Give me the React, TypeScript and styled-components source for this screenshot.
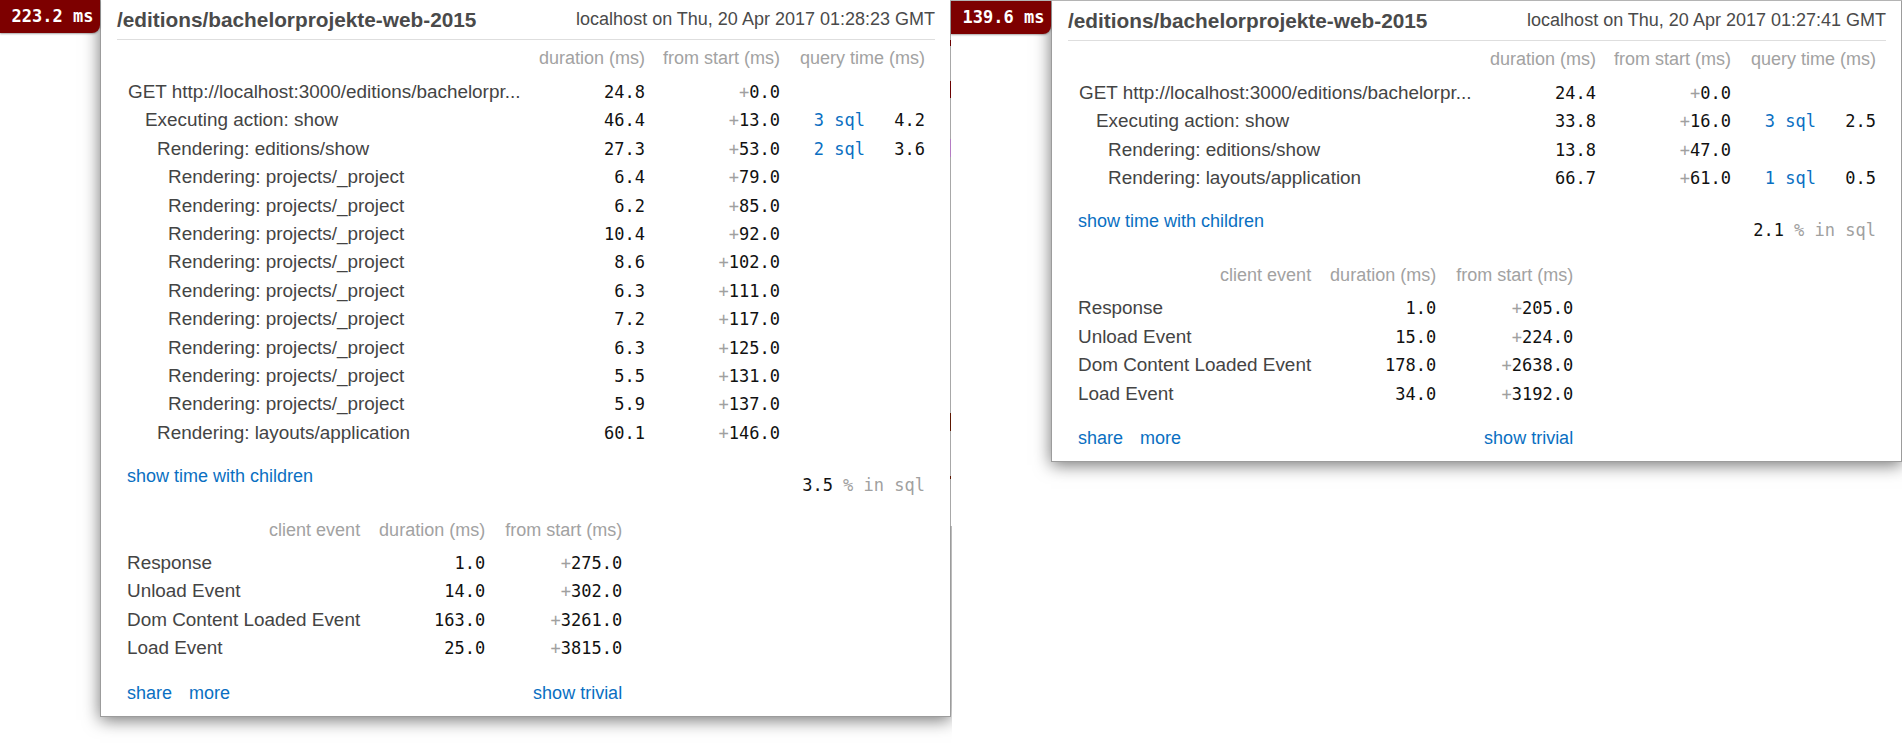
import React from 'react';
import styled, { createGlobalStyle, css } from 'styled-components';

const GlobalStyle = createGlobalStyle`
  html, body { margin: 0; padding: 0; background: #fff; }
  body { font-family: "Liberation Sans", Arial, Helvetica, sans-serif; overflow: hidden; }
  #root { width: 1902px; height: 743px; }
`;

const MONO = `"DejaVu Sans Mono", Menlo, monospace`;

const Page = styled.div`
  display: flex;
  align-items: flex-start;
  width: 1902px;
  height: 743px;
  overflow: hidden;
  background: #fff;
`;

const Shot = styled.div<{ $h: number; $second?: boolean }>`
  position: relative;
  flex: none;
  display: flex;
  align-items: flex-start;
  box-sizing: border-box;
  width: 952px;
  height: ${(p) => p.$h}px;
  overflow: hidden;
  background: #fff;
  ${(p) =>
    p.$second &&
    css`
      margin-left: -2px;
      z-index: 1;
      border-top: 1px solid #b4b4b4;
    `}
`;

const EdgeStrip = styled.div`
  flex: none;
  align-self: stretch;
  width: 1px;
  background: linear-gradient(
    to bottom,
    #a8a8a8 0 39px,
    #6b0000 39px 45px,
    #a8a8a8 45px 80px,
    #6b0000 80px 97px,
    #a8a8a8 97px 138px,
    #b57cc4 138px 156px,
    #a8a8a8 156px 412px,
    #5c1600 412px 430px,
    #a8a8a8 430px 475px,
    #5c1600 475px 478px,
    #a8a8a8 478px
  );
`;

const Badge = styled.div`
  position: relative;
  z-index: 2;
  flex: none;
  box-sizing: border-box;
  width: 100px;
  height: 33px;
  padding-left: 5px;
  text-align: center;
  background: #7d0000;
  border-bottom-right-radius: 8px;
  box-shadow: 0 1px 2px rgba(0, 0, 0, 0.35);
  color: #fff;
  font: bold 17px/33px ${MONO};
  white-space: nowrap;
`;

const Panel = styled.div`
  flex: none;
  box-sizing: border-box;
  width: 851px;
  padding: 0 15px 11px 16px;
  background: #fff;
  border: 1px solid #9c9c9c;
  border-top: 0;
  box-shadow: 0 3px 16px rgba(0, 0, 0, 0.55);
  color: #444;
  font-size: 18.9px;
`;

const Header = styled.div`
  display: flex;
  justify-content: space-between;
  align-items: center;
  height: 39px;
  border-bottom: 1px solid #dedede;
`;

const Title = styled.div`
  font-weight: bold;
  font-size: 20.8px;
  color: #4a4a4a;
`;

const Info = styled.div`
  font-size: 18px;
  color: #4a4a4a;
`;

const Timings = styled.div`
  padding: 4px 10px 0 11px;
`;

const TimingRow = styled.div<{ $head?: boolean }>`
  display: grid;
  grid-template-columns: 1fr 120px 135px 85px 60px;
  height: ${(p) => (p.$head ? '34px' : '28.4px')};
  line-height: 28.4px;
  white-space: nowrap;
`;

const HeadCell = styled.div<{ $span?: number; $align?: 'left' | 'right' }>`
  grid-column: span ${(p) => p.$span ?? 1};
  text-align: ${(p) => p.$align ?? 'right'};
  font-size: 18px;
  color: #a2a2a2;
`;

const Label = styled.div<{ $depth: number }>`
  padding-left: ${(p) => [0, 17, 29, 40][p.$depth] ?? 0}px;
  overflow: hidden;
  white-space: nowrap;
  color: #444;
`;

const Num = styled.div`
  text-align: right;
  font-family: ${MONO};
  font-size: 17px;
  color: #111;
`;

const Plus = styled.span`
  color: #a0a0a0;
`;

const SqlLink = styled.a`
  text-align: right;
  font-family: ${MONO};
  font-size: 17px;
  color: #0a6fc2;
  text-decoration: none;
`;

const Summary = styled.div`
  display: flex;
  justify-content: space-between;
  align-items: flex-start;
  margin-top: 16.8px;
  padding: 0 10px;
  line-height: 24px;
`;

const TextLink = styled.a`
  font-size: 18px;
  color: #0a6fc2;
  text-decoration: none;
  white-space: nowrap;
`;

const SqlPct = styled.div`
  margin-top: 9px;
  font-family: ${MONO};
  font-size: 17px;
  color: #111;
  white-space: pre;
`;

const Dim = styled.span`
  color: #a0a0a0;
`;

const Client = styled.div`
  display: grid;
  grid-template-columns: max-content 125px 137px;
  width: max-content;
  margin-top: 19px;
  padding-left: 10px;
  line-height: 28.4px;
  white-space: nowrap;
`;

const ClientHead = styled.div`
  height: 33px;
  text-align: right;
  font-size: 18px;
  color: #a2a2a2;
`;

const ClientLabel = styled.div`
  color: #444;
`;

const Footer = styled.div`
  grid-column: 1 / -1;
  display: flex;
  justify-content: space-between;
  margin-top: 18.4px;
  line-height: 24px;
`;

const FooterGroup = styled.div`
  display: flex;
  gap: 17px;
`;

type Timing = { label: string; depth: number; dur: string; start: string; sql?: string; sqlTime?: string };
type ClientEv = { label: string; dur: string; start: string };
type Profile = {
  badge: string;
  date: string;
  timings: Timing[];
  pct: string;
  client: ClientEv[];
};

const GET = 'GET http://localhost:3000/editions/bachelorpr...';

const left: Profile = {
  badge: '223.2 ms',
  date: 'localhost on Thu, 20 Apr 2017 01:28:23 GMT',
  timings: [
    { label: GET, depth: 0, dur: '24.8', start: '0.0' },
    { label: 'Executing action: show', depth: 1, dur: '46.4', start: '13.0', sql: '3 sql', sqlTime: '4.2' },
    { label: 'Rendering: editions/show', depth: 2, dur: '27.3', start: '53.0', sql: '2 sql', sqlTime: '3.6' },
    { label: 'Rendering: projects/_project', depth: 3, dur: '6.4', start: '79.0' },
    { label: 'Rendering: projects/_project', depth: 3, dur: '6.2', start: '85.0' },
    { label: 'Rendering: projects/_project', depth: 3, dur: '10.4', start: '92.0' },
    { label: 'Rendering: projects/_project', depth: 3, dur: '8.6', start: '102.0' },
    { label: 'Rendering: projects/_project', depth: 3, dur: '6.3', start: '111.0' },
    { label: 'Rendering: projects/_project', depth: 3, dur: '7.2', start: '117.0' },
    { label: 'Rendering: projects/_project', depth: 3, dur: '6.3', start: '125.0' },
    { label: 'Rendering: projects/_project', depth: 3, dur: '5.5', start: '131.0' },
    { label: 'Rendering: projects/_project', depth: 3, dur: '5.9', start: '137.0' },
    { label: 'Rendering: layouts/application', depth: 2, dur: '60.1', start: '146.0' },
  ],
  pct: '3.5',
  client: [
    { label: 'Response', dur: '1.0', start: '275.0' },
    { label: 'Unload Event', dur: '14.0', start: '302.0' },
    { label: 'Dom Content Loaded Event', dur: '163.0', start: '3261.0' },
    { label: 'Load Event', dur: '25.0', start: '3815.0' },
  ],
};

const right: Profile = {
  badge: '139.6 ms',
  date: 'localhost on Thu, 20 Apr 2017 01:27:41 GMT',
  timings: [
    { label: GET, depth: 0, dur: '24.4', start: '0.0' },
    { label: 'Executing action: show', depth: 1, dur: '33.8', start: '16.0', sql: '3 sql', sqlTime: '2.5' },
    { label: 'Rendering: editions/show', depth: 2, dur: '13.8', start: '47.0' },
    { label: 'Rendering: layouts/application', depth: 2, dur: '66.7', start: '61.0', sql: '1 sql', sqlTime: '0.5' },
  ],
  pct: '2.1',
  client: [
    { label: 'Response', dur: '1.0', start: '205.0' },
    { label: 'Unload Event', dur: '15.0', start: '224.0' },
    { label: 'Dom Content Loaded Event', dur: '178.0', start: '2638.0' },
    { label: 'Load Event', dur: '34.0', start: '3192.0' },
  ],
};

function Profiler({ p }: { p: Profile }) {
  return (
    <>
      <Badge>{p.badge}</Badge>
      <Panel>
        <Header>
          <Title>/editions/bachelorprojekte-web-2015</Title>
          <Info>{p.date}</Info>
        </Header>
        <Timings>
          <TimingRow $head>
            <div />
            <HeadCell>duration (ms)</HeadCell>
            <HeadCell>from start (ms)</HeadCell>
            <HeadCell $span={2}>query time (ms)</HeadCell>
          </TimingRow>
          {p.timings.map((t, i) => (
            <TimingRow key={i}>
              <Label $depth={t.depth}>{t.label}</Label>
              <Num>{t.dur}</Num>
              <Num>
                <Plus>+</Plus>
                {t.start}
              </Num>
              {t.sql ? <SqlLink href="#">{t.sql}</SqlLink> : <div />}
              <Num>{t.sqlTime ?? ''}</Num>
            </TimingRow>
          ))}
        </Timings>
        <Summary>
          <TextLink href="#">show time with children</TextLink>
          <SqlPct>
            {p.pct}
            <Dim> % in sql</Dim>
          </SqlPct>
        </Summary>
        <Client>
          <ClientHead>client event</ClientHead>
          <ClientHead>duration (ms)</ClientHead>
          <ClientHead>from start (ms)</ClientHead>
          {p.client.map((c, i) => (
            <React.Fragment key={i}>
              <ClientLabel>{c.label}</ClientLabel>
              <Num>{c.dur}</Num>
              <Num>
                <Plus>+</Plus>
                {c.start}
              </Num>
            </React.Fragment>
          ))}
          <Footer>
            <FooterGroup>
              <TextLink href="#">share</TextLink>
              <TextLink href="#">more</TextLink>
            </FooterGroup>
            <TextLink href="#">show trivial</TextLink>
          </Footer>
        </Client>
      </Panel>
    </>
  );
}

export default function App() {
  return (
    <>
      <GlobalStyle />
      <Page>
        <Shot $h={743}>
          <Profiler p={left} />
        </Shot>
        <Shot $h={526} $second>
          <EdgeStrip />
          <Profiler p={right} />
        </Shot>
      </Page>
    </>
  );
}
